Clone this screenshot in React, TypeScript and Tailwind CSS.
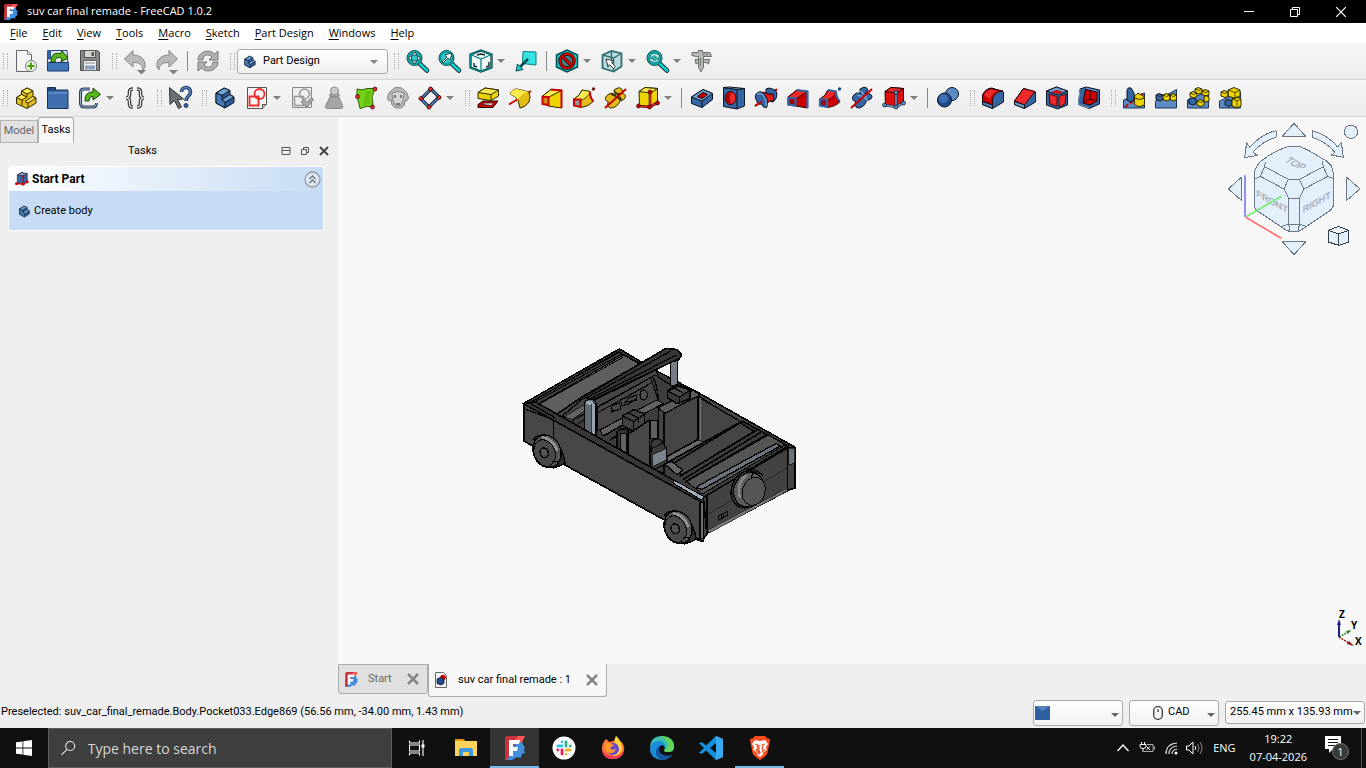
import type { ReactNode } from "react";

type IconName = keyof typeof icons;

type ToolItem =
  | { kind: "tool"; icon: IconName; label: string; menu?: boolean }
  | { kind: "handle" }
  | { kind: "separator" }
  | { kind: "workbench" };

const tool = (icon: IconName, label: string, menu = false): ToolItem => ({ kind: "tool", icon, label, menu });
const handle: ToolItem = { kind: "handle" };
const separator: ToolItem = { kind: "separator" };

const BLUE = { fill: "#3465a4", stroke: "#0b1521" };
const YELLOW = { fill: "#edd400", stroke: "#302b00" };
const RED = { fill: "#cc0000", stroke: "#280000" };

const tealLens = (
  <>
    <path d="m14 14 8 7.500" stroke="#042a2a" strokeWidth="4.500" strokeLinecap="round" />
    <path d="m14.500 14.500 7.500 7" stroke="#16d0d2" strokeWidth="2.800" strokeLinecap="round" />
    <circle cx="9.500" cy="9" r="7.500" fill="#34c6c8" stroke="#0a4a4c" />
    <circle cx="9.500" cy="9" r="6" fill="none" stroke="#06989a" strokeWidth="1.500" />
  </>
);

const icons = {
  newDoc: (
    <>
      <path d="M2.500 1.500h11l4 4v17h-15Z" fill="#f4f4f2" stroke="#666" />
      <path d="M13.500 1.500v4h4" fill="#ddd" stroke="#888" />
      <circle cx="17" cy="17" r="5.500" fill="#f2f8ee" stroke="#777" />
      <path d="M17 13.500v7M13.500 17h7" stroke="#4e9a06" strokeWidth="2.200" />
    </>
  ),
  open: (
    <>
      <path d="M1.500 1.500h3v8h-3zM5 1.500h16l1.500 20h-21V8Z" fill="#e4e8ec" stroke="#204a87" />
      <path d="M1.500 1.500h3v9h-3Z" fill="#3465a4" />
      <path d="M1.500 13.500h21v8.500h-21Z" fill="#3f76b8" stroke="#153a6d" />
      <path d="M5 13c0-8 5-10 9-8l2-3 6 7-7 4 1-3.500c-4-2-7-1-7 3.500Z" fill="#58b81b" stroke="#17410b" />
    </>
  ),
  save: (
    <>
      <path d="M2.500 1.500h17l2 2v18h-19Z" fill="#85888a" stroke="#4c4f50" />
      <path d="M6.500 1.500h11v7h-11Z" fill="#d3d7cf" stroke="#555" />
      <path d="M13.500 3h2.500v4h-2.500Z" fill="#555" />
      <path d="M5.500 11.500h13v10h-13Z" fill="#eee" stroke="#666" />
      <path d="M7 14h10" stroke="#888" />
      <path d="M7 16.500h10v4H7Z" fill="#8aa0bd" />
    </>
  ),
  undo: (
    <>
      <path d="M1.500 10 10 1.500V6c8 0 13 5 12 12l-2 3c0-5-4-8-10-7.500V18Z" fill="#b9b9b9" stroke="#858585" />
      <path d="M14 21h9l-4.500 4.500Z" fill="#808080" />
    </>
  ),
  redo: (
    <>
      <path d="M22.500 10 14 1.500V6C6 6 1 11 2 18l2 3c0-5 4-8 10-7.500V18Z" fill="#b9b9b9" stroke="#858585" />
      <path d="M14 21h9l-4.500 4.500Z" fill="#808080" />
    </>
  ),
  refresh: (
    <g fill="#b0b2b2" stroke="#777">
      <path d="M2 11C2 3 13-1 18.500 5L22 2v9h-9l3-3c-4-4-9-2-9 3Z" />
      <path d="M22 13c0 8-11 12-16.500 6L2 22v-9h9l-3 3c4 4 9 2 9-3Z" />
    </g>
  ),
  fitAll: (
    <>
      {tealLens}
      <path d="m9.500 3 2.500 3H7Zm0 12L12 12H7ZM3.500 9l3-2.500v5Zm12 0-3-2.500v5Z" fill="#fff" stroke="#042a2a" strokeWidth=".8" />
    </>
  ),
  fitSelection: (
    <>
      {tealLens}
      <path d="m5 13 5-5-2-2 7-2-2 7-2-2-5 5Z" fill="#fff" stroke="#042a2a" strokeWidth=".8" />
    </>
  ),
  isometric: (
    <>
      <path d="m12 1.500 10.500 4v13L12 22.500l-10.500-4v-13Z" fill="#f4fbfb" stroke="#042a2a" strokeWidth="2.200" />
      <path d="m12 1.500 10.500 4v13L12 22.500l-10.500-4v-13Zm-10.500 4L12 10l10.500-4.500M12 10v12.500" fill="none" stroke="#06888b" strokeWidth="1.300" />
      <path d="M5 14v3l3 1m8-12-4-1-4 1m9 12 3-1v-4" fill="none" stroke="#042a2a" strokeWidth="1.400" />
    </>
  ),
  linkGo: (
    <>
      <path d="M9 2.500 22 3v13L8.500 14.500Z" fill="#34e2e2" stroke="#068184" />
      <path d="M14 10 5 19" stroke="#034b50" strokeWidth="2.500" />
      <path d="m2 22 1.500-7 5.500 5.500Z" fill="#16d0d2" stroke="#034b50" />
    </>
  ),
  drawStyle: (
    <>
      <path d="m12 1 10.500 5v12L12 23 1.500 18V6Z" fill="#16d0d2" stroke="#034b50" strokeWidth="1.500" />
      <circle cx="12" cy="12" r="7" fill="#37888b" stroke="#280000" strokeWidth="3.400" />
      <circle cx="12" cy="12" r="7" fill="none" stroke="#d40000" strokeWidth="2.200" />
      <path d="m7 7 10 10" stroke="#280000" strokeWidth="3.600" />
      <path d="m7 7 10 10" stroke="#d40000" strokeWidth="2.400" />
    </>
  ),
  boundBox: (
    <>
      <path d="m2.500 6 9-4 10 2.500v13l-8 5-11-3.500Z" fill="#b9dbdd" stroke="#306e72" strokeWidth="1.800" />
      <path d="m2.500 6 11 3 8-4.500M13.500 9v13M11.500 2v13" fill="none" stroke="#306e72" strokeWidth="1.400" />
      <path d="m6 10 8 2-2.500 1.500 4 4-2 2-4-4L8 18Z" fill="#fff" stroke="#333" />
    </>
  ),
  viewSync: (
    <>
      {tealLens}
      <path d="M5 8c1-4 6-4 8-2l1-1v4h-4l1.500-1.500C9 6 7 7 7 8.500Zm9 2c-1 4-6 4-8 2l-1 1V9.500h4L7.500 11C10 12.500 12 11 12 10Z" fill="#d9f5f5" stroke="#055" strokeWidth=".6" />
    </>
  ),
  measure: (
    <g fill="#b6bab4" stroke="#60635f" strokeWidth=".9">
      <path d="M2 3.500h6.500V1.500h4v2H20l1.500 4h-8V18l-2.500 5-2.500-5V7.500H6l-4-1Z" />
      <path d="M13.500 10.500h6l-1 4.500-2.500-1.500h-2.500ZM8.500 10.500H5l1 4.500 2.500-1.500Z" />
      <path d="M10.500 9v8M13 4.500v2m2-2v2m2-2v2" strokeWidth=".8" />
    </g>
  ),
  part: (
    <g stroke="#302b00" strokeLinejoin="round">
      <path d="m2.500 11.500 5-3V5L13 2l6 3v5l3 2v5l-9 5.500-10.500-5Z" fill="#e2bf18" />
      <path d="m2.500 11.500 5-3L13 11l-5 3ZM7.500 5 13 2l6 3-6 3ZM11 15.500l7.500-5 3.500 1.500-8 5Z" fill="#fce94f" />
      <path d="M14 17v5M8 14v5.500M13 8v3" />
    </g>
  ),
  group: (
    <>
      <path d="M1.500 3V1.500h8V4H22v18.500H1.500Z" fill="#3f6faf" stroke="#172f56" />
      <path d="M2 2h7v3H2Z" fill="#204a87" />
      <path d="M2.500 7h19" stroke="#729fcf" />
    </>
  ),
  link: (
    <>
      <path d="M12 3H6Q2.500 3 2.500 6.500V17q0 4 4 4h8q4 0 4-4" fill="none" stroke="#263d5d" strokeWidth="3" />
      <path d="M12 3H6Q2.500 3 2.500 6.500V17q0 4 4 4h8q4 0 4-4" fill="none" stroke="#a9bdd8" strokeWidth=".9" />
      <path d="M7 15C7 8 10 6 15 6V2l7.500 6.500L15 14v-3.500c-3 0-4 2-4 4.500Z" fill="#58b81b" stroke="#17410b" />
    </>
  ),
  varSet: (
    <g fill="none">
      <path d="M10 3C7.500 3 6.500 4 6.500 6v2.500q0 3-3 3.500 3 .5 3 3.500V18c0 2 1 3 3.500 3M14 3c2.500 0 3.500 1 3.500 3v2.500q0 3 3 3.500-3 .5-3 3.500V18c0 2-1 3-3.500 3" stroke="#2e3436" strokeWidth="3.600" />
      <path d="M10 3C7.500 3 6.500 4 6.500 6v2.500q0 3-3 3.500 3 .5 3 3.500V18c0 2 1 3 3.500 3M14 3c2.500 0 3.500 1 3.500 3v2.500q0 3 3 3.500-3 .5-3 3.500V18c0 2-1 3-3.500 3" stroke="#f4f4f4" strokeWidth="1.200" />
    </g>
  ),
  whatsThis: (
    <>
      <path d="m1.500 1.500 14 11.500-6 .5 4 7.500-3 1.500-4-8-4.500 4Z" fill="#6b7072" stroke="#2e3436" />
      <path d="M13.500 6c0-6 9-6 9 0 0 4-4.500 4-4.500 9" fill="none" stroke="#16325a" strokeWidth="3.600" />
      <path d="M13.500 6c0-6 9-6 9 0 0 4-4.500 4-4.500 9" fill="none" stroke="#5a8ac4" strokeWidth="1.600" />
      <circle cx="18" cy="19.500" r="2" fill="#3465a4" stroke="#16325a" />
    </>
  ),
  body: (
    <g stroke="#0b1521" strokeLinejoin="round">
      <path d="m3 7 8-5 6 2.500v4L21 11v5.500L12 22l-9-5Z" fill="#2c5a99" />
      <path d="m3 7 8-5 6 2.500L9 9.500Z" fill="#729fcf" />
      <path d="m9 13.500 8-5L21 11l-9 5.500Z" fill="#729fcf" />
      <path d="M3 7l6 2.500v4l3 3V22l-9-5Z" fill="#4779b8" />
    </g>
  ),
  sketch: (
    <>
      <path d="M2.500 1.500h19v17l-4 4h-15Z" fill="#f4f4f2" stroke="#555" />
      <path d="M17.500 22.500v-4h4" fill="#bbb" stroke="#555" />
      <circle cx="14.500" cy="8" r="5" fill="none" stroke="#ef2929" strokeWidth="1.800" />
      <path d="M4.500 10.500h9v9h-9Z" fill="none" stroke="#ef2929" strokeWidth="1.800" />
    </>
  ),
  validateSketch: (
    <>
      <path d="M2.500 1.500h19v20h-19Z" fill="#ededed" stroke="#888" />
      <circle cx="14.500" cy="8" r="5" fill="none" stroke="#999" strokeWidth="1.500" />
      <path d="M4.500 10.500h9v9h-9Z" fill="none" stroke="#999" strokeWidth="1.500" />
      <path d="m11 16 3-2.500 3 3 4.500-5 2 2-6.500 8Z" fill="#aaa" stroke="#777" />
    </>
  ),
  checkGeometry: (
    <g fill="#a4a4a4" stroke="#888">
      <path d="M3.500 20q-1 2.500 3 2.500h12q3.500 0 2-3L16 9H9Z" />
      <ellipse cx="12.500" cy="9" rx="5" ry="2" />
      <circle cx="12.500" cy="5" r="4" fill="#c9c9c9" />
    </g>
  ),
  subShape: (
    <>
      <path d="M3 3q5 2 10-.5l8 0q-2 6-3 9 1 5 1 9-7-1-13 2-1-6-3-11Z" fill="#73d216" stroke="#2d5a0a" />
      <path d="M12 5h6l-3 7 1 6-7 2Z" fill="#58b010" opacity=".6" />
      <g fill="#ef2929" stroke="#280000" strokeWidth=".7">
        <circle cx="21" cy="3" r="2" />
        <circle cx="3.500" cy="10.500" r="2" />
        <circle cx="18.500" cy="21" r="2" />
      </g>
    </>
  ),
  clone: (
    <g fill="#b8b8b8" stroke="#858585">
      <path d="M6 4q2-3 6-2.500Q16 1 18 4q4 2 4.500 8-1 4-3 2-1 7-4 8H9q-4-2-4-8-3 2-3.500-2Q2 6 6 4Z" />
      <path d="M6 7q6-3 12 0l-1 8-3 5h-4l-3-5Z" fill="#d5d5d5" />
      <path d="M9 9v3m6-3v3m-5 6h4" stroke="#555" strokeWidth="1.400" />
    </g>
  ),
  datum: (
    <>
      <path d="M13 3 21 11 11 21 3 13Z" fill="#f4f4f4" stroke="#0b1521" strokeWidth="3.200" />
      <path d="M13 3 21 11 11 21 3 13Z" fill="none" stroke="#5284c0" strokeWidth="1.600" />
      <g fill="#ef2929" stroke="#280000" strokeWidth=".7">
        <circle cx="12.500" cy="3" r="2" />
        <circle cx="21" cy="11.500" r="2" />
        <circle cx="11" cy="21" r="2" />
        <circle cx="3" cy="12.500" r="2" />
      </g>
    </>
  ),
  pad: (
    <>
      <path d="m2 18.500 5-3.500h15l-5 6.500H2Z" {...RED} />
      <path d="M6 18.500 8.500 17H18l-2.500 2.500Z" fill="#f2dede" stroke="#280000" strokeWidth=".7" />
      <path d="M2 6.500 9 2l13.500 2v6L15 14.500 2 12.500Z" {...YELLOW} />
      <path d="M2 6.500 9 2l13.500 2L15 8.500Z" fill="#fce94f" stroke="#302b00" />
      <path d="M15 8.500v6" stroke="#302b00" />
    </>
  ),
  revolution: (
    <>
      <path d="M1 18.500 23 5" stroke="#cc0000" strokeWidth="2" />
      <path d="M2 8q2-5 7-5l12 3q2 5 0 10-3 5-9 6-1-4-2-8-3-4-8-6Z" fill="#e4bf12" stroke="#302b00" />
      <path d="M2 8q2-5 7-5l12 3q-7 0-11 8-3-4-8-6Z" fill="#fce94f" />
    </>
  ),
  loft: (
    <>
      <path d="m2 10.500 9-7 10.500 1v17.500L8 20Z" {...YELLOW} />
      <path d="m2 10.500 9-7 10.500 1L9 11Z" fill="#fce94f" stroke="#302b00" />
      <path d="m11 3.500 10.500 1v17.500" fill="none" stroke="#cc0000" strokeWidth="2" />
      <path d="M2.500 11h6v8l-6-1Z" fill="#c98d11" stroke="#cc0000" strokeWidth="2" />
    </>
  ),
  sweep: (
    <>
      <path d="M2 13q6-3 8-9l8 1.500q0 6 3 10-4 5-12 6Z" fill="#e5bd1b" stroke="#302b00" />
      <path d="M2 13q6-3 8-9l8 1.500q-2 7-10 9Z" fill="#fce94f" stroke="#302b00" strokeWidth=".8" />
      <path d="M18 6q0 6 3.500 9.500" fill="none" stroke="#cc0000" strokeWidth="2" />
      <path d="M2 13.500h6.500V21L2 19.500Z" fill="#999" stroke="#cc0000" strokeWidth="2" />
      <circle cx="21.500" cy="3" r="1.700" fill="#7a1515" />
    </>
  ),
  helix: (
    <>
      <path d="M10 4q7-5 8.500 1-1 4-6 3 8-2 9 2 0 4-5 4-3 8-10 8-5-2-2-6-5-2-2-6 5-5 9-1Z" fill="#e3bb18" stroke="#302b00" />
      <path d="M7 8q6 2 11 7M10 5q5 4 7 8" stroke="#302b00" strokeWidth="1.500" fill="none" />
      <path d="M1 22 22 3" stroke="#cc0000" strokeWidth="2" />
    </>
  ),
  primitive: (
    <>
      <path d="m3 5.500 6-4 12.500 1v14l-6 4.500-12-1.500Z" {...YELLOW} />
      <path d="m3 5.500 6-4 12.500 1-7 4.500Z" fill="#fce94f" stroke="#302b00" />
      <path d="M14 7v13M2.500 20l11 1 7.500-4" stroke="#280000" strokeWidth="2.600" fill="none" />
      <path d="M14 6v14M2.500 20l11 1 7.500-4" stroke="#ef2929" strokeWidth="1.500" fill="none" />
      <g fill="#cc0000" stroke="#280000" strokeWidth=".6">
        <circle cx="14" cy="6" r="2" />
        <circle cx="2.500" cy="20" r="2" />
        <circle cx="13.500" cy="21" r="2" />
        <circle cx="21.500" cy="17" r="2" />
      </g>
    </>
  ),
  pocket: (
    <>
      <path d="M1.500 11 13 3.500l9.500 4v6L12 21.500l-10.500-4Z" {...BLUE} />
      <path d="M1.500 11 13 3.500l9.500 4L12 15Z" fill="#729fcf" stroke="#0b1521" />
      <path d="M12 15v6.500" stroke="#0b1521" />
      <path d="m7.500 10.500 5.500-4 4.500 2-5.500 4Z" {...RED} />
    </>
  ),
  hole: (
    <>
      <path d="m1.500 1.500 13.500 2 7.500-1V20L15 23 1.500 20.500Z" {...BLUE} />
      <path d="m1.500 1.500 6-.5 15 1.500-7.500 1Z" fill="#729fcf" stroke="#0b1521" />
      <path d="M15 3.500V23" stroke="#0b1521" />
      <ellipse cx="8.500" cy="12" rx="5.500" ry="6.500" fill="#ef2929" stroke="#280000" />
      <path d="M10 6q-5 6 0 12-7-1-7-6t7-6Z" fill="#a40000" />
    </>
  ),
  groove: (
    <>
      <path d="m1 20 6-4m12-9 4-4" stroke="#cc0000" strokeWidth="2" />
      <path d="M12 3q4-2 6 0 4 0 5 5 0 5-4 8l-7-2Z" {...BLUE} />
      <path d="M10 6q4 3 9 2l1 6q-5 1-8 4-4-6-7-9Z" fill="#e01818" stroke="#280000" />
      <path d="M2 8q5-5 9 1 4 6 2 12-4 2-5-3-5 1-5-3-3-3-1-7Z" {...BLUE} />
      <path d="M3 8q5-2 8 4 2 5 1 8" stroke="#729fcf" fill="none" strokeWidth="1.500" />
      <path d="m1 20 7-4.500" stroke="#cc0000" strokeWidth="2" />
    </>
  ),
  subLoft: (
    <>
      <path d="m2 11 9-7 10.500 1.500V22L10 20l-8-1Z" {...RED} />
      <path d="m2 11 9-7 10.500 1.500L10 13Z" fill="#ef2929" stroke="#280000" />
      <path d="M11 4 21.500 5.500V22" fill="none" stroke="#3465a4" strokeWidth="2.200" />
      <path d="M2.500 12h7v7.500l-7-1Z" fill="#a40000" stroke="#3465a4" strokeWidth="2.200" />
    </>
  ),
  subSweep: (
    <>
      <path d="M2 13q6-3 8-9l8 1.500q0 6 4 10-4 5-13 6Z" {...RED} />
      <path d="M2 13q6-3 8-9l8 1.500q-2 7-10 9Z" fill="#ef2929" stroke="#280000" strokeWidth=".8" />
      <path d="m10 4 8 1.500q0 6 3.500 9.500" fill="none" stroke="#3465a4" strokeWidth="2" />
      <path d="M2 13.500h7V21l-7-1.500Z" fill="#a40000" stroke="#3465a4" strokeWidth="2.200" />
      <circle cx="21.500" cy="3" r="1.700" fill="#204a87" />
    </>
  ),
  subHelix: (
    <>
      <path d="M10 3q6-4 8 1-1 4-5 4 7-2 9 2 0 4-5 4-3 8-9 8-5-2-2-6-5-2-3-6 4-5 7-2Z" {...BLUE} />
      <path d="M7 9q6 1 11 6M10 5q5 3 7 8" stroke="#729fcf" strokeWidth="1.500" fill="none" />
      <path d="M1 22 22 3" stroke="#cc0000" strokeWidth="2" />
    </>
  ),
  subPrimitive: (
    <>
      <path d="m3 5.500 6-4 12.500 1v14l-6 4.500-12-1.500Z" fill="#dd1010" stroke="#280000" />
      <path d="m3 5.500 6-4 12.500 1-7 4.500Z" fill="#ef2929" stroke="#280000" />
      <path d="M14 7v13M2.500 19 14 21l7-4" stroke="#0b1521" strokeWidth="2.600" fill="none" />
      <path d="M14 6v14M2.500 19 14 21l7-4" stroke="#729fcf" strokeWidth="1.500" fill="none" />
      <g fill="#5c8cc5" stroke="#0b1521" strokeWidth=".7">
        <circle cx="14" cy="6.500" r="2" />
        <circle cx="2.500" cy="19" r="2" />
        <circle cx="14" cy="21" r="2" />
        <circle cx="21.500" cy="17" r="2" />
      </g>
    </>
  ),
  boolean: (
    <>
      <circle cx="16" cy="8" r="6.500" fill="#5c8cc5" stroke="#0b1521" />
      <circle cx="8.500" cy="14" r="7" fill="#204a87" stroke="#0b1521" />
      <circle cx="7.500" cy="12.500" r="4.500" fill="#3970b4" />
    </>
  ),
  fillet: (
    <>
      <path d="M1.500 9Q5 2 11 2l11.500 4v10l-11 6.500-10-4Z" {...BLUE} />
      <path d="M1.500 15V10Q4 3 10 2.500L22 5q-8 0-10.500 8v6Z" {...RED} />
      <path d="M3 9q3-5 8-5.500l5 1.500Q10 8 9 13Z" fill="#ef2929" />
      <path d="M1.500 15.500 11.500 19v3.500l-10-4Z" fill="#5284c0" stroke="#0b1521" />
    </>
  ),
  chamfer: (
    <>
      <path d="m1.500 15 9-12.500L22.500 6v10l-11 6.500-10-4Z" {...BLUE} />
      <path d="m1.500 15 9-12.500L22 5.500 11.500 19Z" fill="#ef2929" stroke="#280000" />
      <path d="M1.500 15.500 11.500 19v3.500l-10-4Z" fill="#729fcf" stroke="#0b1521" />
    </>
  ),
  draft: (
    <>
      <path d="m1.500 5 10-4 11 4v14l-10 4-11-4Z" {...BLUE} />
      <path d="m1.500 5 10-4 11 4-9.500 4Z" fill="#729fcf" stroke="#0b1521" />
      <path d="m4 8 8 2.500v10L5 18Zm10 2.500L21 8l-1 10-6 3Z" fill="#ef2929" stroke="#280000" strokeWidth=".8" />
      <path d="m6 6 6-2 6 2-5 2Z" fill="#cc0000" />
    </>
  ),
  thickness: (
    <>
      <path d="m3 3 6-2 13.500 3v14L12 22.500l-10.500-4Z" {...BLUE} />
      <path d="M8.500 3.500 20 6v9l-7 4-7-2Z" {...RED} />
      <path d="M13 5v8l-6 3M13 13l7 2" stroke="#280000" fill="none" />
      <path d="m3 3-1.500 15L12 22M9 2l11 3" stroke="#729fcf" fill="none" />
    </>
  ),
  mirrored: (
    <>
      <path d="m1.500 14 21-7v15h-21Z" fill="#5d8ac0" stroke="#16345c" />
      <path d="m3 21 19-14" stroke="#cc0000" strokeWidth="2" strokeDasharray="4 2" />
      <path d="M5 5q0-4 4-3l3 5v7l-3 2-4-2Z" {...BLUE} />
      <path d="M12.500 11.500q0-3 2-3l1.500-1.500 2 1.500q4 0 4.500 4v6q-5 4-10 0Z" {...YELLOW} />
      <path d="M12.500 12q5 3 10 0" stroke="#302b00" fill="none" />
    </>
  ),
  linearPattern: (
    <>
      <path d="m1.500 15 21-11.500V22h-21Z" fill="#5d8ac0" stroke="#16345c" />
      <path d="m2 9 3-1.500L9 9v4.500L6 15l-4-1.500Z" {...BLUE} />
      <path d="m9 9 3-1.500L16 9v4.500L13 15l-4-1.500Zm7 0 3-1.500L22.500 9v4.500L19 15l-3-1.500Z" {...YELLOW} />
      <path d="m9 9 3.500 1.500L16 9m0 0 3.500 1.500 3-1.500M2 9l4 1.500L9 9" fill="none" stroke="#222" strokeWidth=".8" />
    </>
  ),
  polarPattern: (
    <>
      <path d="m1.500 14 21-9V22h-21Z" fill="#5d8ac0" stroke="#16345c" />
      <path d="m3 13 3-1.500L10 13v4.500L7 19l-4-1.500Z" {...BLUE} />
      <path d="m11 15 3-1.500 4 1.500v4l-3 1.500-4-1.500Zm7-4 2-1.500 3 1.500v4l-3 1-2-1ZM4 7l3-1.500L11 7v3.500L8 12l-4-1.500ZM9 3l3-1.500L16 3v3.500L13 8 9 6.500Zm7 2 3-1.500L23 5v3.500L20 10l-4-1.500Z" {...YELLOW} />
      <path d="m4 7 4 1.500L11 7M9 3l4 1.500L16 3m0 2 4 1.500L23 5m-12 10 4 1.500L18 15" fill="none" stroke="#302b00" strokeWidth=".8" />
    </>
  ),
  multiTransform: (
    <>
      <path d="m1.500 15 21-9V22h-21Z" fill="#5d8ac0" stroke="#16345c" />
      <path d="m7 15 3-1.500L14 15v4l-3 1.500L7 19Z" {...BLUE} />
      <path d="m3 6 3-1.500L10 6v4l-3 1.500L3 10Zm7-2 6-2.500 6 2.500v6l-5 2.500-7-2.500ZM14 13l5-2 4 2v7l-4 2-5-2Z" {...YELLOW} />
      <path d="m3 6 4 1.500L10 6m0-2 7 2.500L22 4m-5 2.500V12m-3 1 5 2 4-2m-4 2v7" fill="none" stroke="#302b00" strokeWidth=".8" />
    </>
  ),
  partBlue: (
    <>
      <path d="m4 5 7-4 10 2v13l-6 5-11-2Z" {...BLUE} />
      <path d="m4 5 7-4 10 2-7 4Z" fill="#729fcf" stroke="#0b1521" />
      <path d="M14 7v13M2 20l12 1 7-4" stroke="#cc0000" strokeWidth="2" fill="none" />
      <g fill="#cc0000">
        <circle cx="14" cy="7" r="2" />
        <circle cx="2.500" cy="20" r="2.500" />
        <circle cx="14" cy="21" r="2.500" />
        <circle cx="21" cy="17" r="2.500" />
      </g>
    </>
  ),
};

const mainToolbar: ToolItem[] = [
  handle,
  tool("newDoc", "New document"),
  tool("open", "Open"),
  tool("save", "Save"),
  handle,
  tool("undo", "Undo"),
  tool("redo", "Redo"),
  separator,
  tool("refresh", "Refresh"),
  handle,
  { kind: "workbench" },
  handle,
  tool("fitAll", "Fit all"),
  tool("fitSelection", "Fit selection"),
  tool("isometric", "Isometric view", true),
  tool("linkGo", "Go to linked object"),
  separator,
  tool("drawStyle", "Draw style", true),
  tool("boundBox", "Bounding box", true),
  tool("viewSync", "Sync view", true),
  tool("measure", "Measure"),
];

const partToolbar: ToolItem[] = [
  handle,
  tool("part", "Create part"),
  tool("group", "Create group"),
  tool("link", "Create link", true),
  tool("varSet", "Create variable set"),
  handle,
  tool("whatsThis", "What's this?"),
  handle,
  tool("body", "Create body"),
  tool("sketch", "Create sketch", true),
  tool("validateSketch", "Validate sketch"),
  tool("checkGeometry", "Check geometry"),
  tool("subShape", "Sub-shape binder"),
  tool("clone", "Create clone"),
  tool("datum", "Create datum", true),
  handle,
  tool("pad", "Pad"),
  tool("revolution", "Revolution"),
  tool("loft", "Additive loft"),
  tool("sweep", "Additive pipe"),
  tool("helix", "Additive helix"),
  tool("primitive", "Additive primitive", true),
  separator,
  tool("pocket", "Pocket"),
  tool("hole", "Hole"),
  tool("groove", "Groove"),
  tool("subLoft", "Subtractive loft"),
  tool("subSweep", "Subtractive pipe"),
  tool("subHelix", "Subtractive helix"),
  tool("subPrimitive", "Subtractive primitive", true),
  separator,
  tool("boolean", "Boolean operation"),
  handle,
  tool("fillet", "Fillet"),
  tool("chamfer", "Chamfer"),
  tool("draft", "Draft"),
  tool("thickness", "Thickness"),
  handle,
  tool("mirrored", "Mirrored"),
  tool("linearPattern", "Linear pattern"),
  tool("polarPattern", "Polar pattern"),
  tool("multiTransform", "Multi-transform"),
];

const menus = ["File", "Edit", "View", "Tools", "Macro", "Sketch", "Part Design", "Windows", "Help"];

function Icon({ name, className = "size-6" }: { name: IconName; className?: string }) {
  return (
    <svg viewBox="0 0 24 24" fill="none" className={`${className} shrink-0 overflow-visible`} aria-hidden="true">
      {icons[name]}
    </svg>
  );
}

function Caret({ className = "text-[#808080]" }: { className?: string }) {
  return (
    <svg viewBox="0 0 8 4" className={`h-1 w-2 shrink-0 ${className}`} aria-hidden="true">
      <path d="M0 0h8L4 4Z" fill="currentColor" />
    </svg>
  );
}

function FreeCadLogo({ className }: { className: string }) {
  return (
    <svg viewBox="0 0 24 24" className={className} aria-hidden="true">
      <path d="M2 2q0-2 3-2h16l-2 6-12 17H2Z" fill="#cb333b" />
      <path d="M15 0h7l-3 6-8 2Z" fill="#ff585d" />
      <path d="M2 17 14 7l5-1 1 3 2 2-1 3 1 3-3 1-1 4-4-1-3 2-2 1H2Z" fill="#418fde" />
      <path d="M2 12 9 4v12l-5 8q-2 0-2-2Z" fill="#cb333b" />
      <path d="M6 4h11l-1 4h-6v3h5l-1 4h-4v5H6Z" fill="#fff" />
    </svg>
  );
}

function Toolbar({ items, label }: { items: ToolItem[]; label: string }) {
  return (
    <div role="toolbar" aria-label={label} className="flex h-[37px] shrink-0 items-center overflow-hidden border-b border-[#d6d6d6] bg-linear-to-b from-[#f6f6f6] to-[#ececec]">
      {items.map((item, i) => {
        if (item.kind === "handle") {
          return (
            <span key={i} className="flex h-4 w-[13px] shrink-0 justify-end gap-[3px] pr-[2px] first:w-[10px]">
              <span className="border-l border-dotted border-[#aaa]" />
              <span className="border-l border-dotted border-[#aaa]" />
            </span>
          );
        }
        if (item.kind === "separator") {
          return <span key={i} className="mx-1 h-5 w-px shrink-0 bg-[#888]" />;
        }
        if (item.kind === "workbench") {
          return (
            <div key={i} className="relative w-[151px] shrink-0">
              <Icon name="body" className="pointer-events-none absolute top-1.5 left-1.5 size-3.5" />
              <select aria-label="Workbench" className="block h-[25px] w-full appearance-none rounded-[3px] border border-[#a9a9a9] bg-linear-to-b from-white to-[#f0f0f0] pl-[25px]">
                <option>Part Design</option>
              </select>
              <span className="pointer-events-none absolute top-[11px] right-2.5">
                <Caret />
              </span>
            </div>
          );
        }
        return (
          <button key={i} type="button" aria-label={item.label} className="flex h-8 shrink-0 items-center hover:bg-black/5">
            <span className="flex w-8 justify-center">
              <Icon name={item.icon} />
            </span>
            {item.menu && (
              <span className="w-[13px]">
                <Caret />
              </span>
            )}
          </button>
        );
      })}
    </div>
  );
}

function TitleBar() {
  const button = "flex h-full w-[46px] items-center justify-center hover:bg-white/10";
  return (
    <header className="flex h-[23px] shrink-0 items-center bg-black pr-0.5 font-['Open_Sans',sans-serif] text-white">
      <FreeCadLogo className="mr-2 ml-[3px] size-4" />
      <h1 className="flex-1">suv car final remade - FreeCAD 1.0.2</h1>
      <button type="button" aria-label="Minimize" className={button}>
        <svg viewBox="0 0 10 10" className="size-2.5"><path d="M0 4.500h10" stroke="#fff" /></svg>
      </button>
      <button type="button" aria-label="Restore" className={button}>
        <svg viewBox="0 0 10 10" className="size-2.5" fill="none" stroke="#fff"><path d="M.5 2.500h7v7h-7ZM2.500 2.500v-2h7v7h-2" /></svg>
      </button>
      <button type="button" aria-label="Close" className={button}>
        <svg viewBox="0 0 10 10" className="size-2.5"><path d="m0 0 10 10M10 0 0 10" stroke="#fff" strokeWidth="1.200" /></svg>
      </button>
    </header>
  );
}

function TaskPanel() {
  return (
    <aside className="flex w-[338px] shrink-0 flex-col bg-[#efefef]">
      <div className="flex h-[26px] items-end">
        <button type="button" className="h-[23px] w-[38px] border border-[#b4b4b4] bg-[#e2e2e2] text-[#666]">Model</button>
        <button type="button" className="h-[26px] w-9 rounded-t-[3px] border border-b-0 border-[#aaa] bg-[#f8f8f8]">Tasks</button>
      </div>
      <div className="flex h-4 items-center pr-[9px]">
        <h2 className="flex-1 pl-1 text-center">Tasks</h2>
        <div className="flex gap-[9px]">
          <button type="button" aria-label="Toggle overlay">
            <svg viewBox="0 0 10 10" className="size-2.5" fill="none" stroke="#555"><path d="M1 1.500h8v7H1ZM1 4.500h8" /></svg>
          </button>
          <button type="button" aria-label="Float panel">
            <svg viewBox="0 0 10 10" className="size-2.5" fill="none" stroke="#555"><path d="M1.500 3.500h5v5h-5ZM3.500 3.500v-2h5v5h-2" /></svg>
          </button>
          <button type="button" aria-label="Close panel">
            <svg viewBox="0 0 10 10" className="size-2.5"><path d="m1 1 8 8M9 1 1 9" stroke="#444" strokeWidth="2" /></svg>
          </button>
        </div>
      </div>
      <section className="mt-[7px] mr-[14px] ml-2 overflow-hidden rounded-[3px] border border-white bg-[#c7dcf4]">
        <div className="flex h-6 items-center bg-linear-to-r from-white to-[#c7dcf4] pr-0.5 pl-1.5">
          <Icon name="partBlue" className="mr-[3px] size-[14px]" />
          <h3 className="flex-1 text-[12px] font-bold">Start Part</h3>
          <button type="button" aria-label="Collapse Start Part">
            <svg viewBox="0 0 17 17" className="size-[17px]" fill="none" stroke="#989da3">
              <circle cx="8.500" cy="8.500" r="7.500" fill="#dce7f3" strokeWidth="1.300" />
              <path d="m5.500 8 3-3 3 3m-6 4 3-3 3 3" stroke="#70767c" strokeWidth="1.300" />
            </svg>
          </button>
        </div>
        <div className="h-[39px] px-[9px] pt-3">
          <a href="#create-body" className="flex items-center gap-[3px] leading-4">
            <Icon name="body" className="size-[13px]" />
            Create body
          </a>
        </div>
      </section>
    </aside>
  );
}

function Wheel({ x, y }: { x: number; y: number }) {
  return (
    <g transform={`translate(${x} ${y})`}>
      <path d="M-32-38Q-8-60 28-38 58-4 62 36L50 42 26 50Z" fill="#303030" />
      <ellipse cx="8" cy="0" rx="41" ry="50" fill="#555" transform="rotate(-22 8 0)" />
      <path d="M-8-42Q26-38 39-2" fill="none" stroke="#929292" strokeWidth="8" />
      <ellipse cx="-1" cy="5" rx="31" ry="41" fill="#494949" strokeWidth="3" transform="rotate(-22)" />
      <path d="m24 30 18 2M14 42l16 6" />
      <ellipse cx="-2" cy="4" rx="12" ry="15" fill="#515151" transform="rotate(-20)" />
    </g>
  );
}

/* Shaded view of the car with its edges drawn over the faces */
function CarModel() {
  return (
    <svg viewBox="0 0 900 660" className="absolute top-[218px] left-[172px] h-[220px] w-[300px]" role="img" aria-label="SUV car model" shapeRendering="crispEdges" stroke="#050505" strokeWidth="4" fill="none">
      <path d="M42 205 328 42 440 108 563 172 852 335V460L835 466 595 592 575 618 556 612 465 556 165 390 42 318Z" fill="#464646" strokeWidth="5" />
      {/* hood */}
      <path d="M60 203 326 50 395 88 240 170 135 242Z" fill="#3c3c3c" />
      <path d="m88 205 252-145 48 27-168 95-85 58Z" fill="#5e5e5e" strokeWidth="3" />
      <path d="M55 205 328 52M72 202 335 57M83 210 340 66" strokeWidth="3" />
      <path d="m155 245 60-52 50-20-65 72Z" fill="#424242" />
      <path d="m162 246 70-43v20l-45 30Z" fill="#646464" strokeWidth="2" />
      {/* cabin */}
      <path d="m190 255 245-135 135 65 160 105-215 145-130-50-190-105Z" fill="#3d3d3d" strokeWidth="3" />
      <path d="m262 218 160-90 22 65-182 95Z" fill="#474747" strokeWidth="3" />
      <path d="m260 235 165-92M205 265l210-115" strokeWidth="3" />
      <path d="m305 212 30-10-4 20-25 8Zm40-10 12-14 22-8v15Zm-8 10 18-5 22-14" strokeWidth="4" />
      <ellipse cx="401" cy="180" rx="11" ry="15" fill="#4e4e4e" />
      <path d="m270 285 170-90 20 10-180 98Z" fill="#626262" strokeWidth="3" />
      <path d="m280 303 60-34 60-32M300 315l35-22" strokeWidth="5" />
      <path d="m440 108 123 66-20 14-96-60Z" fill="#3a3a3a" />
      <path d="M425 122q14 12 20 70" />
      <path d="m563 185 152 88-115 65-37-25Z" fill="#454545" />
      <path d="M572 190v125" stroke="#777" strokeWidth="3" />
      <path d="m562 315 25 7-115 62v-30Z" fill="#696969" stroke="#222" strokeWidth="3" />
      {/* windshield frame */}
      <path d="m446 107 34-20v34Z" fill="#f8f8f8" stroke="none" />
      <path d="M480 75h23v75h-23Z" fill="#777e86" strokeWidth="3" />
      <path d="M223 185 468 40l34 4 13 16-10 15-18 5-242 119Z" fill="#373737" strokeWidth="5" />
      <path d="M228 190 482 48M238 193 500 60M250 193 504 72" strokeWidth="4" />
      <path d="M224 205q3-12 17-12t17 12v95l-15 2-19-10Z" fill="#606872" strokeWidth="4" />
      <path d="M243 205q0-8 12 0v93h-12Z" fill="#98a3af" strokeWidth="2" />
      <ellipse cx="238" cy="203" rx="11" ry="6" fill="#9aa5b0" stroke="none" />
      {/* seats */}
      <path d="m445 215 118-38v137l-100 55-18-10Z" fill="#454545" strokeWidth="5" />
      <path d="m445 218 105-52 20 14-106 55Z" fill="#5c5c5c" />
      <path d="m462 232v135" strokeWidth="5" />
      <path d="m472 167 28-18 40 14v28l-38 15-30-18Z" fill="#393939" strokeWidth="5" />
      <path d="m474 168 35 18 31-20-35-12Z" fill="#4c4c4c" />
      <path d="M509 186v20M485 157l35 16" />
      <path d="m353 298 65-43v145l-65-38Z" fill="#484848" strokeWidth="5" />
      <path d="M320 290q15-15 34-5v76l-33-23Z" fill="#333" strokeWidth="5" />
      <path d="M331 294h18v62l-18-14Z" fill="#626262" strokeWidth="3" />
      <path d="M421 257h21v52h-21Z" fill="#606060" strokeWidth="3" />
      <path d="m337 242 35-18 31 12v29l-34 23-32-17Z" fill="#424242" strokeWidth="5" />
      <path d="m337 243 33 17 33-22m-33 22v25m-18-52 33 15v17" />
      <path d="M424 322q18-22 34 0l12 20v44l-39 19-10-15Z" fill="#3a3a3a" strokeWidth="4" />
      <path d="m426 360 43-20v34l-40 20Z" fill="#7b838d" strokeWidth="2" />
      <path d="m424 342 37-20" strokeWidth="3" />
      {/* boot */}
      <path d="m462 388 235-130 137 75-260 160-112-70Z" fill="#3d3d3d" strokeWidth="5" />
      <path d="m486 388 205-125 43 27-219 130Z" fill="#454545" strokeWidth="5" />
      <path d="m465 388 20-9 33 26-17 14Z" fill="#666" />
      <path d="m518 434 235-142M509 424l235-142m26 17-245 142" strokeWidth="5" />
      <path d="m530 440 245-140 50 30-248 147Z" fill="#555" strokeWidth="3" />
      <path d="m567 451 232-126 12 8-235 130-18-4Z" fill="#6d737b" strokeWidth="4" />
      {/* rear face */}
      <path d="m580 487 253-148v126L590 592Z" fill="#424242" strokeWidth="5" />
      <path d="m590 540 243-142" stroke="#242b34" strokeWidth="3" />
      <path d="m592 586 238-125 5 5-235 127Z" fill="#777" stroke="#222" strokeWidth="2" />
      <path d="M833 337h22v123l-22 4Z" fill="#444" />
      <path d="M836 339h18v45l-18 6Z" fill="#6d7178" strokeWidth="2" />
      {/* near side */}
      <path d="M42 207 580 501v117l-24-6-91-56L162 388 132 370 42 318Z" fill="#474747" strokeWidth="5" />
      <path d="m75 200 505 286v18L42 207Z" fill="#373737" strokeWidth="5" />
      <path d="M130 250v123M60 205l75 43M46 222l82 32" strokeWidth="4" />
      <path d="m489 434 94 51-10 9-84-50Z" fill="#a2adb9" strokeWidth="3" />
      <path d="M569 500v115M580 488v125M591 482v110" strokeWidth="5" />
      <path d="M572 505h7v105h-7Z" fill="#6c6c6c" stroke="none" />
      <path d="m545 595 11-3v17l20 2" />
      <path d="m625 543 27-14v12l-27 15Zm8-3v11m8-16v12" strokeWidth="3" />
      <Wheel x={103} y={349} />
      <Wheel x={496} y={577} />
      {/* spare wheel */}
      <ellipse cx="710" cy="463" rx="45" ry="57" fill="#393939" transform="rotate(22 710 463)" />
      <ellipse cx="716" cy="464" rx="44" ry="53" fill="#5c5c5c" transform="rotate(22 716 464)" />
      <path d="M710 420q-32 26-20 68" stroke="#858585" strokeWidth="8" />
      <ellipse cx="731" cy="469" rx="34" ry="43" fill="#555" strokeWidth="3" transform="rotate(18 731 469)" />
      <path d="M708 403q25-6 50 18m-27-10-8 16" />
    </svg>
  );
}

function NavigationCube() {
  return (
    <svg viewBox="0 3 450 450" className="absolute top-0 right-0 size-[150px]" role="img" aria-label="Navigation cube" strokeWidth="3" strokeLinejoin="round" fontFamily="Liberation Sans, Arial, sans-serif">
      <g className="fill-[#e3effb] stroke-[#6d7986]" shapeRendering="crispEdges">
        <path d="m234 22 36 40h-72ZM234 416l-36-40h72ZM37 219l40-36v71ZM432 219l-41-36v71Z" />
        <path d="M180 44v20Q140 75 111 109l13 9-38 7 6-45 9 14Q136 54 180 44ZM288 44v20q40 11 69 45l-11 8 36 7-6-45-11 14Q332 54 288 44Z" />
        <circle cx="405" cy="47" r="20" />
        <path d="m221 91 28 0q35 13 73 39l10 5 14 14 6 24v97q-3 9-13 16l-84 56q-11 6-22 6t-21-5l-86-57q-11-7-11-18v-97q2-18 19-35l10-7q40-29 77-38Z" />
        <path d="m148 137-2 15 71 38h33l72-38-3-18M146 152l-13 29-17 8M322 152l13 29 17 7M133 181l71 38 13-29M335 181l-71 38-14-29M204 219l14 28h32l14-28M218 247v78h32v-78M218 325l-20 6M250 325l20 6M218 325l4 21M250 325l-3 21" fill="none" />
        <path d="m337 343 31-12 30 12v35l-30 10-31-10Zm0 0 31 11 30-11m-30 11v34" stroke="#323e48" />
      </g>
      <g fill="#a3adb8" fontSize="29" textAnchor="middle" stroke="#a3adb8" strokeWidth="1">
        <text transform="translate(230 149) rotate(29) skewX(-25)">TOP</text>
        <text transform="translate(168 266) skewY(29)" fontSize="27">FRONT</text>
        <text transform="translate(302 268) skewY(-29)" fontSize="27">RIGHT</text>
      </g>
      <path d="M87 303V178" stroke="#7b7bff" strokeWidth="5" />
      <path d="m89 303 107-62" stroke="#73ef73" strokeWidth="5" />
      <path d="m89 304 107 63" stroke="#ff7373" strokeWidth="5" />
    </svg>
  );
}

function AxisCross() {
  return (
    <svg viewBox="0 -8 32 48" className="absolute right-0 bottom-[14px] h-12 w-8" aria-label="Axes" role="img" fontSize="10" fontWeight="700" fontFamily="Open Sans, sans-serif">
      <path d="M5 27V12" stroke="#1c1c84" strokeWidth="2" />
      <path d="m5 9 2 6H3Z" fill="#1c1c84" />
      <path d="m5 27 11-6" stroke="#248024" strokeWidth="1.500" strokeDasharray="2 1" />
      <path d="m17 20-5 1 2 3Z" fill="#248024" />
      <path d="m5 27 13 8" stroke="#842020" strokeWidth="1.500" strokeDasharray="2 1" />
      <path d="m20 36-7-2 2-3Z" fill="#842020" />
      <text x="5" y="8">Z</text>
      <text x="17" y="19">Y</text>
      <text x="21" y="35">X</text>
    </svg>
  );
}

function CloseMark() {
  return (
    <svg viewBox="0 0 12 12" className="size-3" aria-hidden="true">
      <path d="m1 1 10 10M11 1 1 11" stroke="#858585" strokeWidth="2.500" />
    </svg>
  );
}

function DocumentTabs() {
  return (
    <div className="flex h-[33px] shrink-0 items-start bg-[#efefef]">
      <div className="flex h-[30px] w-[90px] items-center rounded-b-[3px] border border-[#aaa] bg-[#e0e0e0] pr-2 pl-[5px]">
        <button type="button" className="flex flex-1 items-center gap-[9px] text-[#666]">
          <FreeCadLogo className="size-[15px]" />
          Start
        </button>
        <button type="button" aria-label="Close Start"><CloseMark /></button>
      </div>
      <div className="flex h-[33px] w-[179px] items-center rounded-b-[3px] border border-t-0 border-[#aaa] bg-[#f8f8f8] pr-2 pl-1.5">
        <button type="button" className="flex flex-1 items-center gap-[11px]">
          <svg viewBox="0 0 12 16" className="h-4 w-3" aria-hidden="true">
            <path d="M.5.5h8l3 3v12H.5Z" fill="#f6f6f6" stroke="#666" />
            <circle cx="8" cy="5.500" r="2.800" fill="#cc0000" />
            <path d="m2 7 3-1.500L9 7v4.500L6 13l-4-1.500Z" fill="#204a87" stroke="#0b1521" strokeWidth=".7" />
          </svg>
          suv car final remade : 1
        </button>
        <button type="button" aria-label="Close suv car final remade"><CloseMark /></button>
      </div>
    </div>
  );
}

function StatusBar() {
  const box = "flex items-center rounded-[3px] border border-[#a9a9a9] bg-linear-to-b from-white to-[#f1f1f1]";
  return (
    <footer className="flex h-[31px] shrink-0 items-center bg-[#efefef] pr-px pl-px">
      <p className="flex-1 whitespace-nowrap">Preselected: suv_car_final_remade.Body.Pocket033.Edge869 (56.56 mm, -34.00 mm, 1.43 mm)</p>
      <button type="button" aria-label="Notifications" className={`${box} mr-1.5 h-[26px] w-[90px] justify-between pr-[3px] pl-px`}>
        <svg viewBox="0 0 15 14" className="h-3.5 w-[15px]" aria-hidden="true">
          <path d="M0 0h15v14H0Z" fill="#2f5f9f" />
          <path d="M0 0h15L7.500 5Z" fill="#5583bd" />
        </svg>
        <Caret className="mt-1 text-[#666]" />
      </button>
      <button type="button" className={`${box} mr-1.5 h-[26px] w-[90px] pr-[3px] pl-[23px]`}>
        <svg viewBox="0 0 10 14" className="mr-[5px] h-3.5 w-2.5" fill="none" stroke="#3c3c3c" strokeWidth="1.300" aria-hidden="true">
          <rect x=".7" y=".7" width="8.600" height="12.600" rx="4" />
          <path d="M5 3v3" />
        </svg>
        <span className="flex-1 text-left">CAD</span>
        <Caret className="mt-1 text-[#666]" />
      </button>
      <button type="button" className={`${box} h-[23px] w-[140px] justify-between pr-[3px] pl-1 whitespace-nowrap`}>
        255.45 mm x 135.93 mm
        <Caret className="text-[#666]" />
      </button>
    </footer>
  );
}

function TaskButton({ label, children, active, open }: { label: string; children: ReactNode; active?: boolean; open?: boolean }) {
  return (
    <button
      type="button"
      aria-label={label}
      className={`flex h-full w-[49px] shrink-0 items-center justify-center border-y-2 border-t-transparent hover:bg-white/10 ${active ? "bg-[#333]" : ""} ${active || open ? "border-b-[#76b9ed]" : "border-b-transparent"}`}
    >
      {children}
    </button>
  );
}

function Taskbar() {
  return (
    <nav aria-label="Taskbar" className="flex h-10 shrink-0 items-stretch bg-[#101010] font-['Open_Sans',sans-serif] text-white">
      <button type="button" aria-label="Start menu" className="flex w-12 shrink-0 items-center justify-center">
        <svg viewBox="0 0 16 16" className="size-4"><path d="m0 2.300 6.500-.9v6.200H0ZM7.300 1.300 16 0v7.600H7.300ZM0 8.400h6.500v6.200L0 13.700ZM7.300 8.400H16V16l-8.700-1.300Z" fill="#fff" /></svg>
      </button>
      <label className="flex w-[344px] shrink-0 items-center gap-3 border border-[#5c5c5c] bg-[#3f3f3f] pl-3">
        <svg viewBox="0 0 16 16" className="size-4" fill="none" stroke="#e8e8e8" strokeWidth="1.200" aria-hidden="true"><circle cx="10" cy="5.800" r="4.900" /><path d="M6.500 9.500.5 15.500" /></svg>
        <input type="search" aria-label="Search" placeholder="Type here to search" className="w-full min-w-0 bg-transparent text-[14px] outline-none placeholder:text-[#d6d6d6]" />
      </label>
      <TaskButton label="Task view">
        <svg viewBox="0 0 16 16" className="size-4" fill="none" stroke="#fff" strokeWidth="1.100"><path d="M.5.500V3h10V.500M.5 15.500V13h10v2.500M.5 5h10v6H.5ZM14 0v16" /><path d="M12.500 4.500h3v3h-3Z" fill="#fff" stroke="none" /></svg>
      </TaskButton>
      <TaskButton label="File Explorer">
        <svg viewBox="0 0 22 20" className="h-5 w-[22px]"><path d="M0 1h8l2 2h12v15H0Z" fill="#ffd35b" /><path d="M0 1h8l2 2H0Z" fill="#e19c13" /><path d="M4 18v-6q0-2 2-2h10q2 0 2 2v6h-4v-4H8v4Z" fill="#3e97df" /></svg>
      </TaskButton>
      <TaskButton label="FreeCAD" active>
        <FreeCadLogo className="size-6" />
      </TaskButton>
      <TaskButton label="Slack">
        <svg viewBox="0 0 24 24" className="size-6" fill="none" strokeWidth="2.800" strokeLinecap="round">
          <circle cx="12" cy="12" r="11.500" fill="#fff" />
          <path d="M5.800 10H10M10 5.800v.1" stroke="#36c5f0" />
          <path d="M14 5.800V10m4.200 0v.1" stroke="#2eb67d" />
          <path d="M5.800 14v.1M10 14v4.200" stroke="#e01e5a" />
          <path d="M14 18.200v.1M14 14h4.200" stroke="#ecb22e" />
        </svg>
      </TaskButton>
      <TaskButton label="Firefox">
        <svg viewBox="0 0 24 24" className="size-6">
          <path d="M5 3q2 1 3 3 3-1 5-1l2-5q3 3 4 6l1-1q4 5 3 10Q21 23 12 23 1 23 1 12q0-5 4-9Z" fill="#ff7139" />
          <path d="M15 0q4 3 5 7 2 5 0 9-3 5-9 4l7-5q0-6-5-9Z" fill="#ffd83b" />
          <circle cx="12" cy="13" r="6" fill="#6c47cf" />
          <path d="M4 7q6-1 9 3-3 0-4 2 1 3 6 1-2 5-7 4Q3 15 4 7Z" fill="#ff9b25" />
          <path d="M1 13q3 7 11 7 7 0 10-5-1 8-10 8Q2 23 1 13Z" fill="#f13a58" />
        </svg>
      </TaskButton>
      <TaskButton label="Edge">
        <svg viewBox="0 0 24 24" className="size-6">
          <path d="M0 11Q1 0 12 0q12 1 12 11 0 5-6 5-4 0-4-2 2-2 0-5-3-4-8-2-4 1-6 4Z" fill="#38bfae" />
          <path d="M12 0q12 1 12 11 0 5-6 5-4 0-4-2 6-2 3-8-3-5-8-6Z" fill="#62d35c" />
          <path d="M0 12Q2 5 8 5q7 0 7 6-2-3-5-1-3 4 1 8 5 4 11 1-4 5-10 5Q0 23 0 12Z" fill="#1b8ddd" />
          <path d="M10 10q-5 2-4 8 1 4 6 6 6 0 10-5-7 2-11-1-4-4-1-8Z" fill="#1554a0" />
        </svg>
      </TaskButton>
      <TaskButton label="Visual Studio Code">
        <svg viewBox="0 0 24 24" className="size-6">
          <path d="M17 0 24 3v18l-7 3L7 14.500 2.500 18 0 16.700 5 12 0 7.300 2.500 6 7 9.500Zm0 7-6 5 6 5Z" fill="#168fdb" fillRule="evenodd" />
          <path d="M17 0 24 3v18l-7 3Z" fill="#39a8ef" />
        </svg>
      </TaskButton>
      <TaskButton label="Brave" open>
        <svg viewBox="0 0 24 24" className="size-6">
          <path d="m7 0h10l2.500 2.500L22 3l-.5 4-2 10q-1 3-7.500 7-6.500-4-7.500-7l-2-10L2 3l2.500-.5Z" fill="#fb4b21" />
          <path d="m7 4 5 1 5-1 3 4-2 3 .5 3-4 3 1 1-3.500 3L8.500 18l1-1-4-3 .5-3-2-3Z" fill="#fff" />
          <path d="m7 8 3 1-1 2 1 2-2 1 2 2m7-8-3 1 1 2-1 2 2 1-2 2m-3-7v5l-1 3 1 1 1-1-1-3" stroke="#fb4b21" fill="none" strokeWidth="1.200" />
        </svg>
      </TaskButton>
      <div className="ml-auto flex shrink-0 items-center">
        <button type="button" aria-label="Show hidden icons">
          <svg viewBox="0 0 12 8" className="h-2 w-3" fill="none" stroke="#fff" strokeWidth="1.300"><path d="m.5 7 5.500-6 5.500 6" /></svg>
        </button>
        <svg viewBox="0 0 16 12" className="ml-2.5 h-3 w-4" fill="none" stroke="#fff" role="img" aria-label="Battery">
          <path d="M8 2.500h6v7H5M14.500 4.500h1v3h-1" stroke="#aaa" />
          <path d="M2.500 0v2.500m3-2.500v2.500M1 2.500h6v2q0 2-3 2t-3-2ZM4 6.500V10M7.500 4.500 11 8m0-3.500L7.500 8" />
        </svg>
        <svg viewBox="0 0 13 13" className="ml-2.5 size-[13px]" fill="none" stroke="#ddd" strokeWidth="1.200" role="img" aria-label="Network">
          <path d="M1 12Q1 2 12 1M4 12q0-7 8-8M7 12q0-4 5-5" />
          <circle cx="11" cy="11" r="1.500" fill="#fff" stroke="none" />
        </svg>
        <svg viewBox="0 0 17 14" className="ml-2 h-3.5 w-[17px]" fill="none" stroke="#fff" role="img" aria-label="Volume">
          <path d="M.5 5H3l4-4v12L3 9H.5ZM9 5q1.500 2 0 4" />
          <path d="M11.500 3q3 4 0 8M14 1q4 6 0 12" stroke="#888" />
        </svg>
        <span className="ml-2.5">ENG</span>
        <time className="ml-[14px] text-center leading-[18px]">19:22<br />07-04-2026</time>
        <button type="button" aria-label="1 new notification" className="relative ml-[18px] size-6">
          <svg viewBox="0 0 24 24" className="size-6">
            <path d="M0 0h16v13H8l-4 4v-4H0Z" fill="#fff" />
            <path d="M3 3.500h10M3 6.500h10M3 9.500h7" stroke="#111" />
            <circle cx="15.500" cy="15.500" r="8" fill="#3a3a3a" stroke="#777" />
          </svg>
          <span className="absolute right-0 bottom-0 w-[17px] text-center leading-[17px]">1</span>
        </button>
        <span className="mr-1 ml-3 h-10 w-px bg-[#555]" />
      </div>
    </nav>
  );
}

export default function App() {
  return (
    <div className="flex h-screen flex-col overflow-hidden bg-[#efefef] font-['Roboto','Open_Sans',sans-serif] text-[11px] text-black">
      <TitleBar />
      <nav aria-label="Menu" className="flex h-[20px] shrink-0 items-center gap-[15px] bg-white pl-[10px] font-['Open_Sans',sans-serif]">
        {menus.map((menu) => (
          <button key={menu} type="button" className="hover:bg-[#cce8ff]">
            <span className="underline underline-offset-2">{menu[0]}</span>
            {menu.slice(1)}
          </button>
        ))}
      </nav>
      <Toolbar items={mainToolbar} label="File and view" />
      <Toolbar items={partToolbar} label="Part Design" />
      <main className="flex min-h-0 flex-1">
        <TaskPanel />
        <section className="flex min-w-0 flex-1 flex-col">
          <div className="relative min-h-0 flex-1 overflow-hidden bg-[#f8f8f8]">
            <CarModel />
            <NavigationCube />
            <AxisCross />
          </div>
          <DocumentTabs />
        </section>
      </main>
      <StatusBar />
      <Taskbar />
    </div>
  );
}
